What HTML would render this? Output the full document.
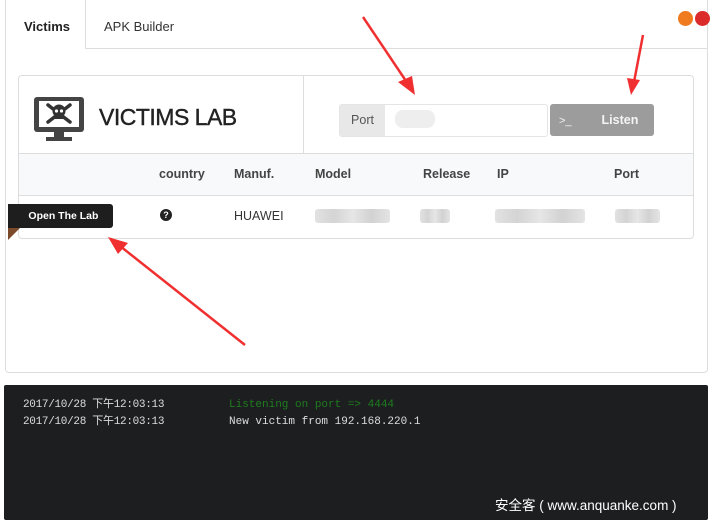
<!DOCTYPE html>
<html><head><meta charset="utf-8"><style>
body{margin:0;width:711px;height:522px;background:#fff;font-family:"Liberation Sans",sans-serif;position:relative;overflow:hidden}
.a{position:absolute}
.th{position:absolute;top:167px;font-size:12.5px;font-weight:bold;color:#444}
.blur{position:absolute;height:14px;background:linear-gradient(90deg,#e2e2e2,#d4d4d4,#e6e6e6,#d2d2d2,#e4e4e4);top:209px;border-radius:3px}
.mono{font-family:"Liberation Mono","Noto Sans CJK SC",monospace;font-size:11px;position:absolute;line-height:14px;height:14px;white-space:nowrap}
</style></head><body>
<div class="a" style="left:5px;top:0;width:701px;height:372px;border:1px solid #ddd;border-top:none;border-radius:0 0 4px 4px"></div>
<div class="a" style="left:85px;top:0;width:1px;height:49px;background:#ddd"></div>
<div class="a" style="left:85px;top:48px;width:622px;height:1px;background:#ddd"></div>
<div class="a" style="left:24px;top:19px;font-size:13px;font-weight:bold;color:#222">Victims</div>
<div class="a" style="left:104px;top:19px;font-size:13px;color:#333">APK Builder</div>
<div class="a" style="left:678px;top:11px;width:15px;height:15px;border-radius:50%;background:#f07a1e"></div>
<div class="a" style="left:695px;top:11px;width:15px;height:15px;border-radius:50%;background:#dc2b2b"></div>
<div class="a" style="left:18px;top:75px;width:674px;height:162px;border:1px solid #ddd;border-radius:4px"></div>
<div class="a" style="left:303px;top:76px;width:1px;height:77px;background:#ddd"></div>
<div class="a" style="left:19px;top:153px;width:674px;height:41px;background:#f8f9fa;border-top:1px solid #ddd;border-bottom:1px solid #ddd"></div>
<svg class="a" style="left:33px;top:96px" width="52" height="46" viewBox="0 0 52 46"><rect x="1" y="1" width="50" height="35" rx="3" fill="#444"/><rect x="6" y="5" width="40" height="26" fill="#fff"/><path d="M15 9l22 17M37 9L15 26" stroke="#333" stroke-width="3.5" stroke-linecap="round"/><circle cx="26" cy="15" r="6.5" fill="#333"/><rect x="22" y="19" width="8" height="4" fill="#333"/><circle cx="23.5" cy="15" r="1.6" fill="#fff"/><circle cx="28.5" cy="15" r="1.6" fill="#fff"/><rect x="21" y="36" width="10" height="5" fill="#444"/><rect x="13" y="41" width="26" height="4" fill="#444"/></svg>
<div class="a" style="left:99px;top:104px;font-size:23px;color:#222;letter-spacing:-0.5px;-webkit-text-stroke:0.4px #222">VICTIMS LAB</div>
<div class="a" style="left:339px;top:104px;width:207px;height:31px;border:1px solid #e5e5e5;border-radius:3px"></div>
<div class="a" style="left:340px;top:105px;width:45px;height:31px;background:#e8e8e8;font-size:12.5px;color:#555;line-height:31px;text-align:center">Port</div>
<div class="a" style="left:395px;top:110px;width:40px;height:18px;background:#eee;border-radius:8px"></div>
<div class="a" style="left:550px;top:104px;width:104px;height:32px;background:#9c9c9c;border-radius:3px;color:#f4f4f4;font-size:12.5px;font-weight:bold;line-height:32px"><span style="margin-left:9px;font-weight:normal;font-size:11px">&gt;_</span><span style="margin-left:30px">Listen</span></div>
<div class="th" style="left:159px">country</div><div class="th" style="left:234px">Manuf.</div><div class="th" style="left:315px">Model</div><div class="th" style="left:423px">Release</div><div class="th" style="left:497px">IP</div><div class="th" style="left:614px">Port</div>
<div class="a" style="left:160px;top:209px;width:12px;height:12px;border-radius:50%;background:#222;color:#fff;font-size:9px;font-weight:bold;text-align:center;line-height:12px">?</div>
<div class="a" style="left:234px;top:209px;font-size:12.5px;color:#333">HUAWEI</div>
<div class="blur" style="left:315px;width:75px"></div><div class="blur" style="left:420px;width:30px"></div><div class="blur" style="left:495px;width:90px"></div><div class="blur" style="left:615px;width:45px"></div>
<div class="a" style="left:8px;top:228px;width:0;height:0;border-left:12px solid #7a4a2a;border-bottom:12px solid transparent"></div>
<div class="a" style="left:8px;top:204px;width:105px;height:24px;background:#1e1e1e;border-radius:0 3px 3px 0;color:#fff;font-size:10.5px;font-weight:bold;line-height:24px;text-align:center">&nbsp;&nbsp;Open The Lab</div>
<div class="a" style="left:4px;top:385px;width:704px;height:135px;background:#1d1e20;border-radius:2px"></div>
<div class="mono" style="left:23px;top:398px;color:#ddd;letter-spacing:-0.3px">2017/10/28 下午12:03:13</div>
<div class="mono" style="left:229px;top:398px;color:#1e7d1e">Listening on port =&gt; 4444</div>
<div class="mono" style="left:23px;top:415px;color:#ddd;letter-spacing:-0.3px">2017/10/28 下午12:03:13</div>
<div class="mono" style="left:229px;top:415px;color:#ddd">New victim from 192.168.220.1</div>
<div class="a" style="left:495px;top:494px;font-size:13.5px;color:#fff;font-family:'Liberation Sans','Noto Sans CJK SC',sans-serif">安全客 ( www.anquanke.com )</div>
<svg class="a" style="left:0;top:0" width="711" height="522"><g stroke="#f03030" fill="#f03030" stroke-width="2.5"><line x1="363" y1="17" x2="408" y2="84"/><polygon points="415,95 398,82 412,76" stroke="none"/><line x1="643" y1="35" x2="634" y2="82"/><polygon points="631,95 627,78 640,80" stroke="none"/><line x1="245" y1="345" x2="120" y2="246"/><polygon points="108,237 128,243 118,254" stroke="none"/></g></svg>
</body></html>
